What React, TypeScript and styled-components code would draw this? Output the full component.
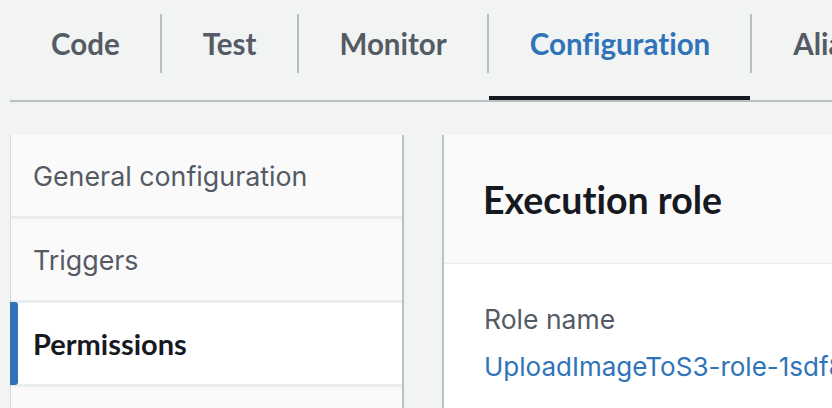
import React from "react";
import styled, { createGlobalStyle } from "styled-components";

const Global = createGlobalStyle`
  html, body { margin: 0; padding: 0; background: #f2f3f3; }
  body {
    font-family: Inter, "Open Sans", "Liberation Sans", sans-serif;
    font-variant-ligatures: none;
    overflow: hidden;
  }
  * { box-sizing: border-box; }
`;

const Page = styled.div`
  width: 832px;
  height: 408px;
  overflow: hidden;
  background: #f2f3f3;
`;

const TabList = styled.div`
  display: flex;
  margin-left: 10px;
  border-bottom: 2px solid #b6c0c1;
  white-space: nowrap;
`;

const Tab = styled.div<{ $active?: boolean }>`
  position: relative;
  height: 100px;
  padding-top: 14px;
  display: flex;
  align-items: flex-start;
  flex-shrink: 0;
  &::after {
    content: "";
    position: absolute;
    left: 0;
    right: 2px;
    bottom: 0;
    height: 4px;
    background: ${(p) => (p.$active ? "#16191f" : "transparent")};
  }
`;

const TabLabel = styled.span<{ $active?: boolean; $last?: boolean }>`
  height: 59px;
  display: flex;
  align-items: center;
  padding: 0 40px 0 41px;
  border-right: ${(p) => (p.$last ? "none" : "2px solid #b6c0c1")};
  font-family: Lato, "Liberation Sans", sans-serif;
  font-size: 29.5px;
  font-weight: 700;
  color: ${(p) => (p.$active ? "#2f74b9" : "#545b64")};
`;

const Content = styled.div`
  display: flex;
  align-items: flex-start;
  gap: 38px;
  padding: 33px 0 0 10px;
`;

const SideNav = styled.div`
  width: 394px;
  flex-shrink: 0;
  display: flex;
  flex-direction: column;
  gap: 3px;
  background: #eaeded;
  border-left: 1px solid #d5dbdb;
  border-right: 2px solid #b9c3c4;
`;

const NavItem = styled.div<{ $active?: boolean }>`
  position: relative;
  height: 81px;
  display: flex;
  align-items: center;
  padding-left: 22px;
  background: ${(p) => (p.$active ? "#ffffff" : "#fafafa")};
  font-family: ${(p) => (p.$active ? "Lato, " : "")}Inter, "Liberation Sans", sans-serif;
  font-size: ${(p) => (p.$active ? 29 : 26.8)}px;
  font-weight: ${(p) => (p.$active ? 700 : 400)};
  color: ${(p) => (p.$active ? "#16191f" : "#545b64")};
  &::before {
    content: "";
    display: ${(p) => (p.$active ? "block" : "none")};
    position: absolute;
    left: -1px;
    top: -1px;
    bottom: -1px;
    width: 8px;
    background: #2f74b9;
    border-radius: 0 3px 3px 0;
  }
`;

const Panel = styled.div`
  flex: 1;
  min-width: 420px;
  background: #ffffff;
  border-left: 2px solid #b9c3c4;
`;

const PanelHeader = styled.div`
  height: 129px;
  display: flex;
  align-items: center;
  padding-left: 39px;
  background: #fafafa;
  border-bottom: 1px solid #eaeded;
`;

const Heading = styled.h2`
  margin: 0;
  font-family: Lato, "Liberation Sans", sans-serif;
  font-size: 37.5px;
  font-weight: 700;
  color: #16191f;
  white-space: nowrap;
`;

const PanelBody = styled.div`
  padding: 38px 0 0 40px;
  height: 160px;
`;

const FieldLabel = styled.div`
  font-size: 26.5px;
  color: #545b64;
  line-height: 34px;
`;

const FieldLink = styled.a`
  display: block;
  margin-top: 14px;
  font-size: 26px;
  line-height: 34px;
  color: #2f74b9;
  text-decoration: none;
  white-space: nowrap;
`;

const tabs = ["Code", "Test", "Monitor", "Configuration", "Aliases"];
const navItems = ["General configuration", "Triggers", "Permissions", "Destinations"];

export default function App() {
  return (
    <Page>
      <Global />
      <TabList>
        {tabs.map((t, i) => (
          <Tab key={t} $active={t === "Configuration"}>
            <TabLabel $active={t === "Configuration"} $last={i === tabs.length - 1}>
              {t}
            </TabLabel>
          </Tab>
        ))}
      </TabList>
      <Content>
        <SideNav>
          {navItems.map((n) => (
            <NavItem key={n} $active={n === "Permissions"}>
              {n}
            </NavItem>
          ))}
        </SideNav>
        <Panel>
          <PanelHeader>
            <Heading>Execution role</Heading>
          </PanelHeader>
          <PanelBody>
            <FieldLabel>Role name</FieldLabel>
            <FieldLink href="#">UploadImageToS3-role-1sdf8k2q</FieldLink>
          </PanelBody>
        </Panel>
      </Content>
    </Page>
  );
}
